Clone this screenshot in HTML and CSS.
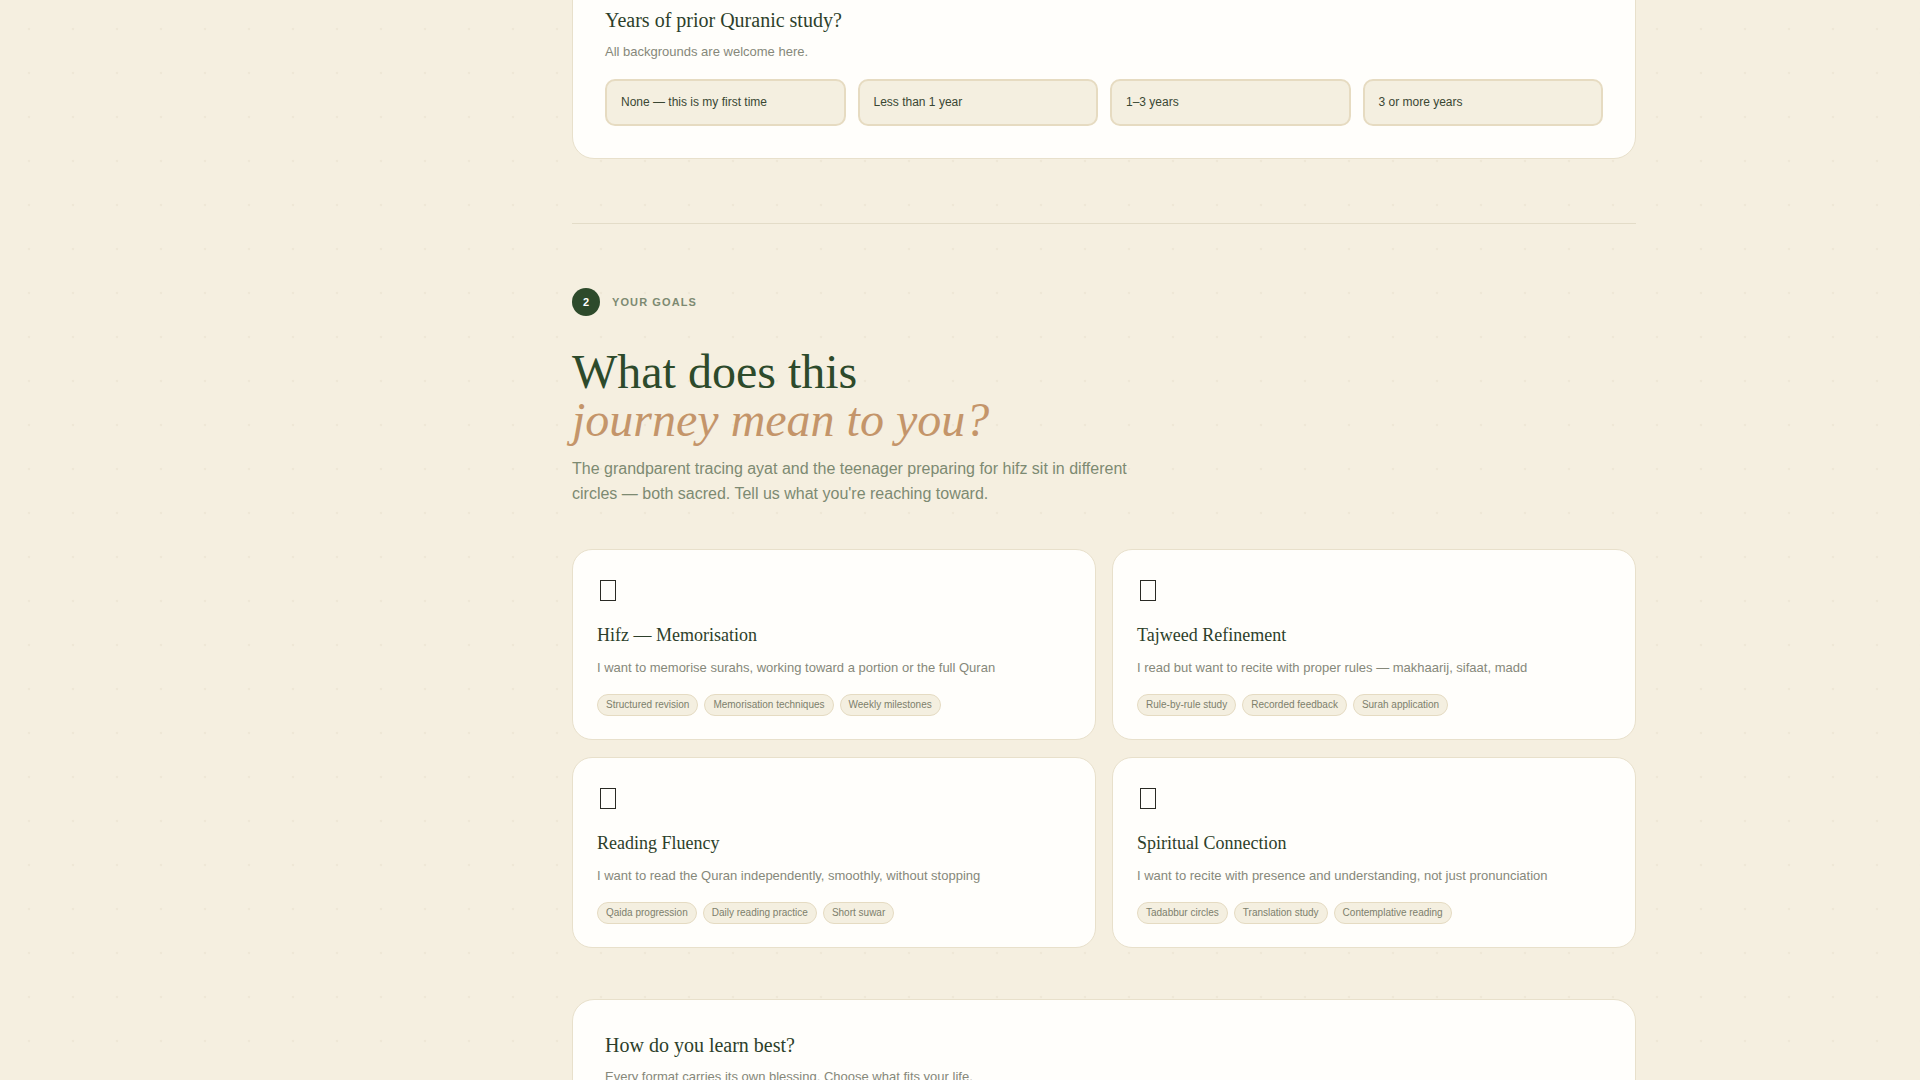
FILE: index.html
```html
<!DOCTYPE html>
<html lang="en">
<head>
    <meta charset="UTF-8">
    <meta name="viewport" content="width=device-width, initial-scale=1.0">
    <title>Begin Your Journey - Intake</title>
    <link rel="stylesheet" href="styles.css">
</head>
<body>
    <div class="layout">
        <aside class="rail"></aside>

        <main class="main">
            <div class="container">

                <!-- step 1, last question -->
                <section class="question first">
                    <h3>Years of prior Quranic study?</h3>
                    <p class="hint">All backgrounds are welcome here.</p>
                    <div class="options">
                        <button class="option">None — this is my first time</button>
                        <button class="option">Less than 1 year</button>
                        <button class="option">1–3 years</button>
                        <button class="option">3 or more years</button>
                    </div>
                </section>

                <hr class="divider">

                <!-- step 2 -->
                <div class="step">
                    <span class="step-num">2</span>
                    <span class="step-label">Your Goals</span>
                </div>

                <h2 class="title">What does this<br><em>journey mean to you?</em></h2>
                <p class="lead">The grandparent tracing ayat and the teenager preparing for hifz sit in different circles — both sacred. Tell us what you're reaching toward.</p>

                <div class="goals">
                    <div class="goal">
                        <span class="goal-icon"></span>
                        <h4>Hifz — Memorisation</h4>
                        <p>I want to memorise surahs, working toward a portion or the full Quran</p>
                        <div class="tags">
                            <span class="tag">Structured revision</span>
                            <span class="tag">Memorisation techniques</span>
                            <span class="tag">Weekly milestones</span>
                        </div>
                    </div>
                    <div class="goal">
                        <span class="goal-icon"></span>
                        <h4>Tajweed Refinement</h4>
                        <p>I read but want to recite with proper rules — makhaarij, sifaat, madd</p>
                        <div class="tags">
                            <span class="tag">Rule-by-rule study</span>
                            <span class="tag">Recorded feedback</span>
                            <span class="tag">Surah application</span>
                        </div>
                    </div>
                    <div class="goal">
                        <span class="goal-icon"></span>
                        <h4>Reading Fluency</h4>
                        <p>I want to read the Quran independently, smoothly, without stopping</p>
                        <div class="tags">
                            <span class="tag">Qaida progression</span>
                            <span class="tag">Daily reading practice</span>
                            <span class="tag">Short suwar</span>
                        </div>
                    </div>
                    <div class="goal">
                        <span class="goal-icon"></span>
                        <h4>Spiritual Connection</h4>
                        <p>I want to recite with presence and understanding, not just pronunciation</p>
                        <div class="tags">
                            <span class="tag">Tadabbur circles</span>
                            <span class="tag">Translation study</span>
                            <span class="tag">Contemplative reading</span>
                        </div>
                    </div>
                </div>

                <section class="question">
                    <h3>How do you learn best?</h3>
                    <p class="hint">Every format carries its own blessing. Choose what fits your life.</p>
                    <div class="options">
                        <button class="option">One-to-one sessions</button>
                        <button class="option">Small group circle</button>
                        <button class="option">Self-paced with check-ins</button>
                        <button class="option">Weekend intensives</button>
                    </div>
                </section>

            </div>
        </main>
    </div>
</body>
</html>
```

FILE: styles.css
```css
html, body {
    margin: 0;
    height: 100%;
    overflow: hidden;
}
body {
    font-family: "Liberation Sans", Arial, sans-serif;
    background-color: #f5efe0;
    background-image: radial-gradient(circle, rgba(150, 130, 90, 0.07) 1px, transparent 1.6px);
    background-size: 44px 44px;
    background-position: 7px 7px;
    color: #2d4a2b;
}
.layout {
    display: grid;
    grid-template-columns: 288px 1fr;
}
.main {
    padding-bottom: 80px;
}
.container {
    width: 1064px;
    margin: 0 auto;
}

/* question cards */
.question {
    background: #fffefb;
    border: 1px solid #e8e0cb;
    border-radius: 22px;
    padding: 32px;
}
.question.first {
    margin-top: -26px;
}
.question h3 {
    font-family: "Liberation Serif", "Times New Roman", serif;
    font-weight: normal;
    font-size: 20px;
    line-height: 26px;
    color: #2d3f2a;
    margin: 0 0 9px;
}
.hint {
    font-size: 13px;
    line-height: 19.5px;
    color: #86887a;
    margin: 0 0 17px;
}
.options {
    display: grid;
    grid-template-columns: repeat(4, 1fr);
    gap: 12px;
}
.option {
    font-family: "Liberation Sans", Arial, sans-serif;
    font-size: 12px;
    color: #3a4733;
    text-align: left;
    background: #f4efe0;
    border: 2px solid #e6dbc1;
    border-radius: 10px;
    padding: 14px 14px;
    height: 47px;
}

.divider {
    border: none;
    border-top: 1px solid #e3dcc8;
    margin: 64px 0;
}

/* step header */
.step {
    display: flex;
    align-items: center;
    gap: 12px;
}
.step-num {
    width: 28px;
    height: 28px;
    border-radius: 50%;
    background: #2d4a2b;
    color: #fff;
    font-size: 11px;
    font-weight: bold;
    display: flex;
    align-items: center;
    justify-content: center;
}
.step-label {
    font-size: 11px;
    font-weight: bold;
    letter-spacing: 0.1em;
    text-transform: uppercase;
    color: #7d8a72;
}

.title {
    font-family: "Liberation Serif", "Times New Roman", serif;
    font-weight: normal;
    font-size: 48px;
    line-height: 48px;
    color: #2d4a2b;
    margin: 32px 0 12px;
}
.title em {
    color: #c4956a;
}
.lead {
    font-size: 16px;
    line-height: 25.6px;
    color: #7d8a72;
    max-width: 580px;
    margin: 0 0 42px;
}

/* goal cards */
.goals {
    display: grid;
    grid-template-columns: 1fr 1fr;
    gap: 17px 16px;
    margin-bottom: 51px;
}
.goal {
    background: #fffefb;
    border: 1px solid #e8e0cb;
    border-radius: 20px;
    padding: 24px 24px 23px;
}
.goal-icon {
    display: block;
    width: 14px;
    height: 19px;
    border: 1.5px solid #2a2a24;
    margin: 6px 0 0 3px;
}
.goal h4 {
    font-family: "Liberation Serif", "Times New Roman", serif;
    font-weight: normal;
    font-size: 18px;
    line-height: 23px;
    color: #2d3f2a;
    margin: 23px 0 11px;
}
.goal p {
    font-size: 13px;
    line-height: 19px;
    color: #86887a;
    margin: 0 0 17px;
}
.tags {
    display: flex;
    gap: 6px;
}
.tag {
    font-size: 10px;
    line-height: 12px;
    color: #7d806c;
    background: #f4efe0;
    border: 1px solid #e5dbc2;
    border-radius: 999px;
    padding: 4px 8px;
}
```
